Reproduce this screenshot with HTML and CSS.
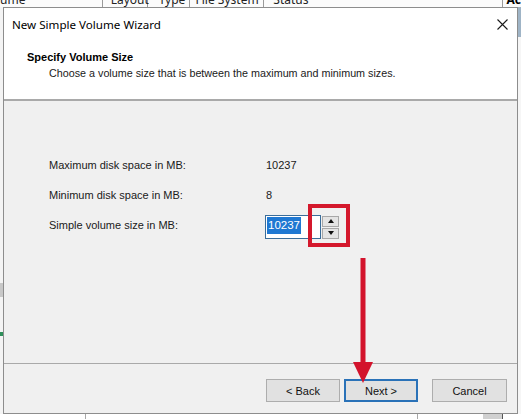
FILE: index.html
```html
<!DOCTYPE html>
<html lang="en">
<head>
    <meta charset="UTF-8">
    <meta name="viewport" content="width=device-width, initial-scale=1.0">
    <title>New Simple Volume Wizard</title>
    <link rel="stylesheet" href="styles.css">
</head>
<body>
    <div class="bg-head">
        <div class="col col-volume">ume</div>
        <div class="col col-layout">Layout</div>
        <div class="col col-type">Type</div>
        <div class="col col-fs">File System</div>
        <div class="col col-status">Status</div>
        <div class="col col-actions">Ac</div>
    </div>

    <div class="main">
        <div class="side side-left"></div>

        <div class="dialog">
            <div class="dialog-top">
                <div class="titlebar">
                    <span class="title">New Simple Volume Wizard</span>
                    <svg class="close" width="11" height="11" viewBox="0 0 11 11">
                        <path d="M0.5 0.5 L10.5 10.5 M10.5 0.5 L0.5 10.5" stroke="#1a1a1a" stroke-width="1.1" fill="none"/>
                    </svg>
                </div>
                <div class="page-head">
                    <h1>Specify Volume Size</h1>
                    <p>Choose a volume size that is between the maximum and minimum sizes.</p>
                </div>
            </div>

            <div class="dialog-body">
                <div class="form">
                    <div class="label">Maximum disk space in MB:</div>
                    <div class="value">10237</div>

                    <div class="label">Minimum disk space in MB:</div>
                    <div class="value">8</div>

                    <div class="label">Simple volume size in MB:</div>
                    <div class="value">
                        <div class="spin-field">
                            <div class="input"><span class="selected">10237</span></div>
                            <div class="spinner">
                                <div class="spin-btn"><span class="tri tri-up"></span></div>
                                <div class="spin-btn"><span class="tri tri-down"></span></div>
                            </div>
                            <div class="highlight"></div>
                        </div>
                    </div>
                </div>

                <div class="footer">
                    <button class="btn">&lt; Back</button>
                    <button class="btn btn-default">Next &gt;</button>
                    <button class="btn btn-cancel">Cancel</button>
                </div>

                <svg class="arrow" width="20" height="126" viewBox="0 0 20 126">
                    <rect x="7.5" y="0" width="5" height="108" fill="#d3132c"/>
                    <polygon points="0,104 20,104 10,125" fill="#d3132c"/>
                </svg>
            </div>
        </div>

        <div class="side side-right"></div>
    </div>

    <div class="bg-bottom">
        <div class="bottom-cell bottom-a"></div>
        <div class="bottom-cell bottom-b"></div>
        <div class="bottom-cell bottom-c"></div>
        <div class="bottom-cell bottom-d"></div>
    </div>
</body>
</html>
```

FILE: styles.css
```css
body {
    margin: 0;
    padding: 0;
    width: 521px;
    height: 419px;
    overflow: hidden;
    background-color: #fff;
    font-family: "Liberation Sans", Arial, sans-serif;
    font-size: 11px;
    color: #1a1a1a;
    display: flex;
    flex-direction: column;
}

/* window behind the wizard */

.bg-head {
    height: 7px;
    display: flex;
    overflow: hidden;
    background-color: #fbfbfb;
    font-family: "Noto Sans", sans-serif;
    font-size: 12px;
    line-height: 12px;
    flex-shrink: 0;
}

.col {
    box-sizing: border-box;
    border-right: 1px solid #9a9a9a;
    margin-top: -6px;
    white-space: nowrap;
    color: #222;
}

.col-volume {
    width: 103px;
}

.col-layout {
    width: 45px;
    padding-left: 8px;
}

.col-type {
    width: 42px;
    padding-left: 11px;
}

.col-fs {
    width: 75px;
    padding-left: 6px;
}

.col-status {
    width: 239px;
    padding-left: 9px;
}

.col-actions {
    flex-grow: 1;
    border-right: none;
    padding-left: 4px;
    font-weight: bold;
    color: #000;
}

.main {
    display: flex;
    height: 407px;
    flex-shrink: 0;
}

.side-left {
    width: 3px;
    background: linear-gradient(#f4f4f4 0 276px, #c8c8c8 276px 290px, #f4f4f4 290px 325px, #2f8f5a 325px 329px, #f4f4f4 329px);
}

.side-right {
    flex-grow: 1;
    background: linear-gradient(#9fb4c6 0 30px, #f6f6f6 30px);
}

.bg-bottom {
    flex-grow: 1;
    display: flex;
    background-color: #fff;
}

.bottom-cell {
    box-sizing: border-box;
    border-right: 1px solid #a8a8a8;
}

.bottom-a {
    width: 86px;
}

.bottom-b {
    width: 332px;
}

.bottom-c {
    width: 65px;
    border-right: none;
}

.bottom-d {
    width: 20px;
    background-color: #d0d0d0;
    border-right: 1px solid #555;
}

/* wizard dialog */

.dialog {
    box-sizing: border-box;
    width: 515px;
    height: 407px;
    border: 1px solid #8d8d8d;
    display: flex;
    flex-direction: column;
    background-color: #f0f0f0;
}

.dialog-top {
    background-color: #fff;
    height: 91px;
    border-bottom: 2px solid #a9a9a9;
    flex-shrink: 0;
}

.titlebar {
    height: 32px;
    display: flex;
    align-items: center;
    justify-content: space-between;
    padding: 0 9px 0 8px;
}

.title {
    font-family: "Noto Sans", sans-serif;
    font-size: 11.6px;
    color: #000;
    margin-top: 1px;
}

.page-head {
    padding-left: 23px;
    padding-top: 10px;
}

.page-head h1 {
    margin: 0;
    font-size: 11px;
    font-weight: bold;
    color: #000;
    line-height: 14px;
}

.page-head p {
    margin: 2px 0 0 22px;
    line-height: 14px;
    font-size: 10.75px;
    color: #1a1a1a;
}

.dialog-body {
    flex-grow: 1;
    display: flex;
    flex-direction: column;
    position: relative;
}

.form {
    height: 263px;
    box-sizing: border-box;
    padding: 56px 0 0 45px;
    display: grid;
    grid-template-columns: 217px auto;
    grid-auto-rows: 30px;
    align-content: start;
    border-bottom: 1px solid #a9a9a9;
}

.label,
.value {
    line-height: 16px;
}

.spin-field {
    position: relative;
    display: flex;
    align-items: center;
    margin-top: -2px;
    margin-left: -1px;
}

.input {
    box-sizing: border-box;
    width: 56px;
    height: 24px;
    border: 1px solid #3a6d9a;
    background-color: #fff;
    padding: 1px 0 0 1px;
}

.selected {
    display: inline-block;
    background-color: #1f78d2;
    color: #fff;
    padding: 0 1px;
    line-height: 17px;
    font-size: 11.5px;
}

.spinner {
    margin-left: 1px;
    display: flex;
    flex-direction: column;
    gap: 1px;
}

.spin-btn {
    box-sizing: border-box;
    width: 17px;
    height: 11px;
    background-color: #e4e4e4;
    border: 1px solid #a8a8a8;
    display: flex;
    align-items: center;
    justify-content: center;
}

.tri {
    width: 0;
    height: 0;
    border-left: 3px solid transparent;
    border-right: 3px solid transparent;
}

.tri-up {
    border-bottom: 4px solid #111;
}

.tri-down {
    border-top: 4px solid #111;
}

/* red annotation box around the spinner */
.highlight {
    position: absolute;
    left: 43px;
    top: -11px;
    width: 42px;
    height: 43px;
    box-sizing: border-box;
    border: 4px solid #d4182c;
}

.footer {
    display: flex;
    justify-content: flex-end;
    padding: 15px 10px 0 0;
}

.btn {
    box-sizing: border-box;
    width: 74px;
    height: 23px;
    background-color: #e1e1e1;
    border: 1px solid #adadad;
    font-family: "Liberation Sans", Arial, sans-serif;
    font-size: 11px;
    color: #111;
    padding: 0;
}

.btn-default {
    margin-left: 4px;
    border-color: #2a72b8;
    box-shadow: inset 0 0 0 1px #2a72b8;
}

.btn-cancel {
    margin-left: 14px;
    width: 75px;
}

/* red annotation arrow */
.arrow {
    position: absolute;
    left: 349px;
    top: 157px;
}
```
